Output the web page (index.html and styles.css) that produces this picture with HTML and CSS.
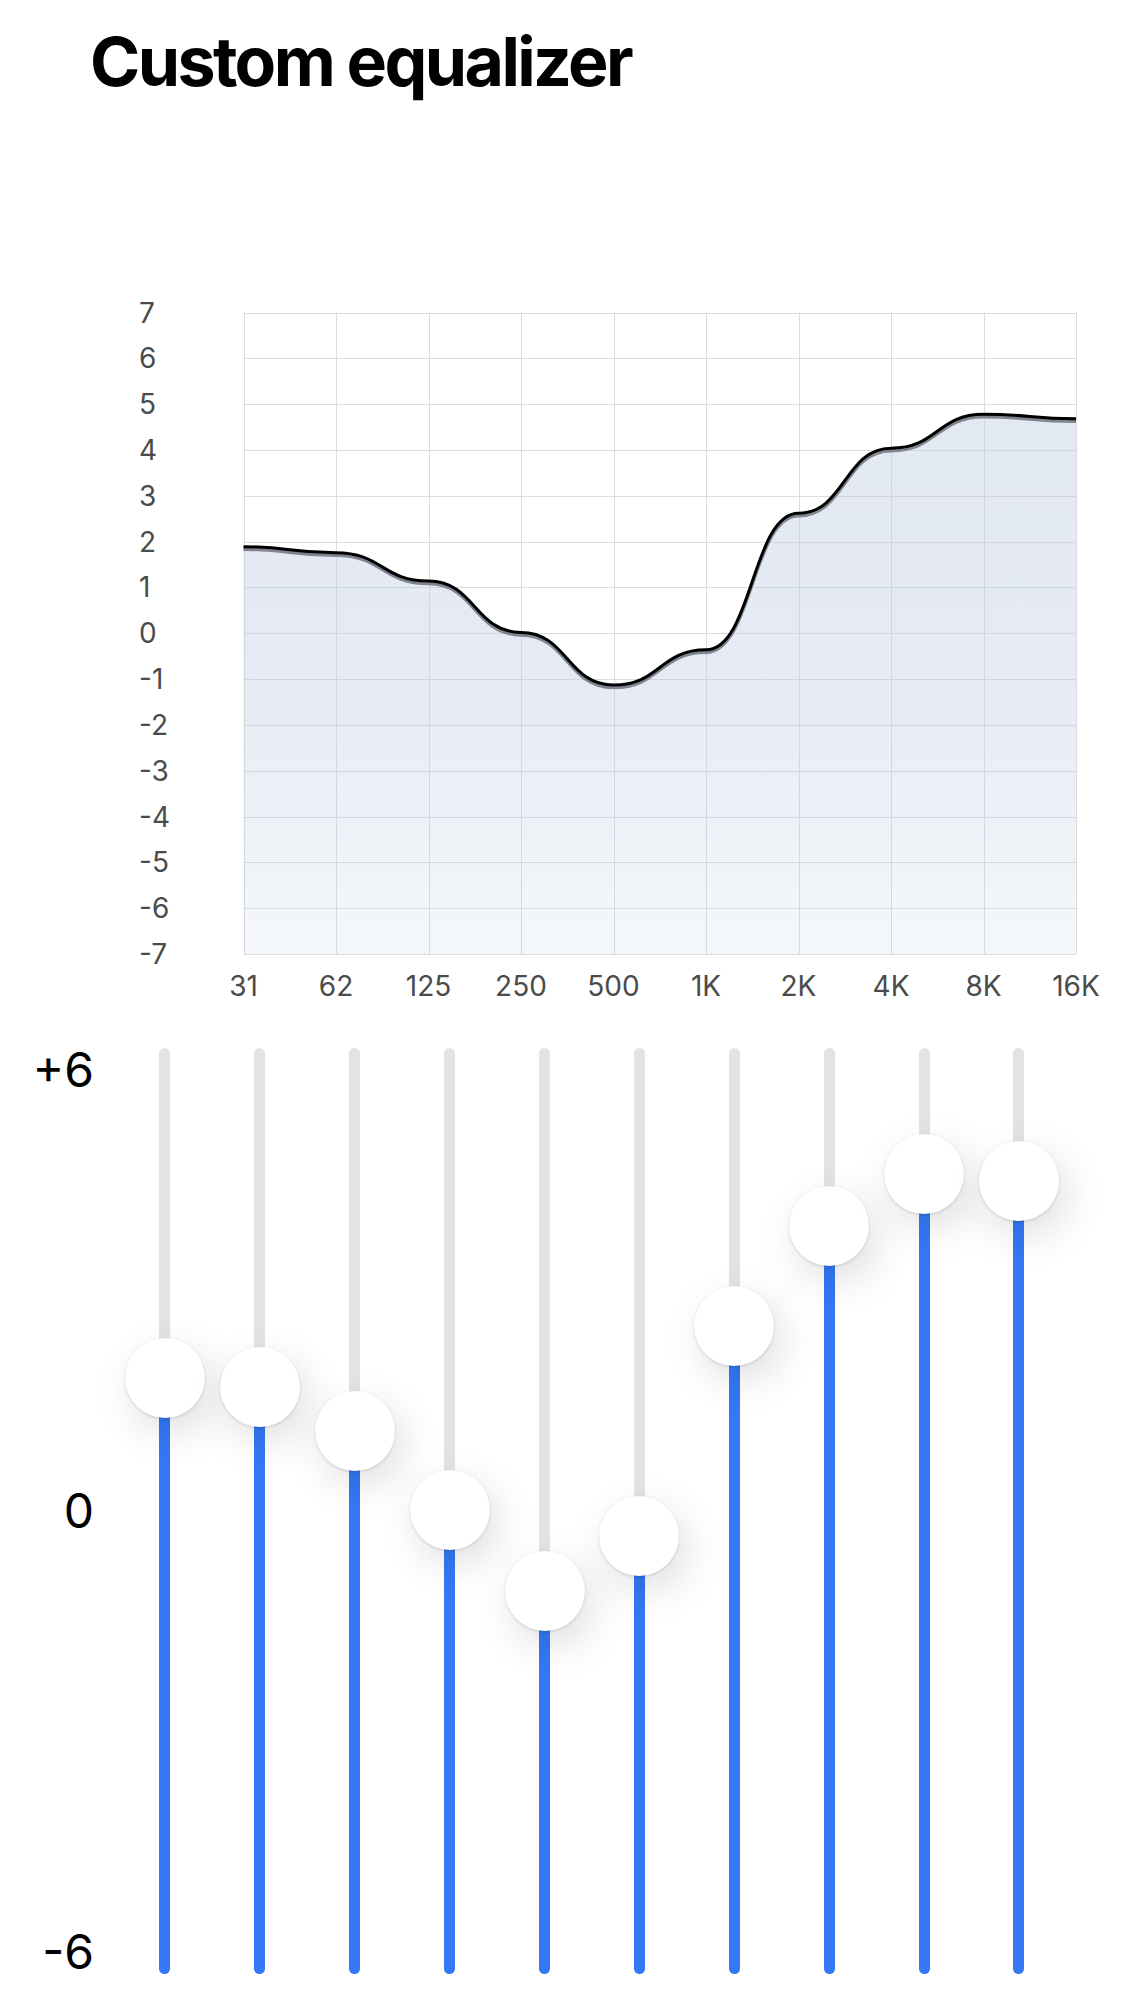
FILE: index.html
```html
<!DOCTYPE html>
<html>
<head>
    <title>Custom equalizer</title>
    <link rel="stylesheet" href="styles.css">
</head>
<body>
    <h1 class="title">Custom equalizer</h1>

    <div class="chart">
        <svg id="chart" width="1125" height="740" viewBox="0 0 1125 740"></svg>
    </div>

    <div class="eq">
        <div class="eq-scale">
            <span>+6</span>
            <span>0</span>
            <span>-6</span>
        </div>
        <div class="eq-bands" id="bands"></div>
    </div>

    <script>
        var bands = ["31", "62", "125", "250", "500", "1K", "2K", "4K", "8K", "16K"];
        var gains = [1.89, 1.76, 1.14, 0.02, -1.13, -0.36, 2.62, 4.04, 4.78, 4.68];

        function drawChart() {
            var svg = document.getElementById("chart");
            var plotLeft = 243.5, colW = 92.5;
            var plotTop = 32.5, rowH = 45.83;
            var plotRight = plotLeft + colW * 9;
            var plotBottom = plotTop + rowH * 14;
            var zeroY = plotTop + rowH * 7;

            function yFor(v) {
                return zeroY - v * rowH;
            }

            var html = `
                <defs>
                    <linearGradient id="fill" x1="0" y1="${plotTop}" x2="0" y2="${plotBottom}" gradientUnits="userSpaceOnUse">
                        <stop offset="0" stop-color="rgb(190,204,226)" stop-opacity="0.45"/>
                        <stop offset="0.55" stop-color="rgb(190,204,226)" stop-opacity="0.40"/>
                        <stop offset="1" stop-color="rgb(190,204,226)" stop-opacity="0.16"/>
                    </linearGradient>
                </defs>`;

            // grid
            var grid = "";
            for (var i = 0; i <= 14; i++) {
                var y = Math.round(plotTop + i * rowH) + 0.5;
                grid += `<line x1="${plotLeft}" y1="${y}" x2="${plotRight}" y2="${y}"/>`;
            }
            for (var j = 0; j <= 9; j++) {
                var x = Math.round(plotLeft + j * colW) + 0.5;
                grid += `<line x1="${x}" y1="${plotTop}" x2="${x}" y2="${plotBottom}"/>`;
            }
            html += `<g class="grid">${grid}</g>`;

            // curve, flat at every band
            var d = "M" + plotLeft + " " + yFor(gains[0]);
            for (var k = 1; k < gains.length; k++) {
                var x0 = plotLeft + (k - 1) * colW;
                var x1 = plotLeft + k * colW;
                var y0 = yFor(gains[k - 1]);
                var y1 = yFor(gains[k]);
                d += ` C${x0 + colW / 2} ${y0} ${x1 - colW / 2} ${y1} ${x1} ${y1}`;
            }
            var area = d + ` L${plotRight} ${plotBottom} L${plotLeft} ${plotBottom} Z`;
            html += `<path class="area" d="${area}"/>`;
            html += `<path class="curve-shadow" d="${d}" transform="translate(0 2.5)"/>`;
            html += `<path class="curve" d="${d}"/>`;

            // labels
            for (var v = 7; v >= -7; v--) {
                html += `<text x="139" y="${yFor(v)}" class="y-label">${v}</text>`;
            }
            for (var b = 0; b < bands.length; b++) {
                html += `<text x="${plotLeft + b * colW}" y="${plotBottom + 32}" class="x-label">${bands[b]}</text>`;
            }

            svg.innerHTML = html;
        }

        function drawSliders() {
            var container = document.getElementById("bands");
            var trackH = 926, thumb = 80, unit = (trackH - thumb) / 12;

            for (var i = 0; i < gains.length; i++) {
                var center = thumb / 2 + (6 - gains[i]) * unit;
                var band = document.createElement("div");
                band.className = "band";
                band.innerHTML = `
                    <div class="track">
                        <div class="track-fill" style="height: ${trackH - center}px"></div>
                        <div class="thumb" style="top: ${center - thumb / 2}px"></div>
                    </div>
                `;
                container.appendChild(band);
            }
        }

        drawChart();
        drawSliders();
    </script>
</body>
</html>
```

FILE: styles.css
```css
body {
    margin: 0;
    background-color: #fff;
    font-family: Inter, "Noto Sans", "Liberation Sans", sans-serif;
    color: #000;
}

.title {
    margin: 0;
    padding: 27px 0 0 90px;
    height: 70px;
    font-size: 68px;
    line-height: 68px;
    font-weight: 700;
    letter-spacing: -2.6px;
}

.chart {
    margin-top: 183px;
}

.chart svg {
    display: block;
}

.grid line {
    stroke: #dcdcdf;
    stroke-width: 1;
}

.area {
    fill: url(#fill);
}

.curve {
    fill: none;
    stroke: #000;
    stroke-width: 3;
}

.curve-shadow {
    fill: none;
    stroke: #7f848e;
    stroke-width: 3.5;
}

.y-label,
.x-label {
    font-family: Inter, "Noto Sans", "Liberation Sans", sans-serif;
    font-size: 28px;
    fill: #4b4b4b;
    dominant-baseline: central;
}

.x-label {
    text-anchor: middle;
}

.eq {
    display: flex;
    margin-top: 28px;
}

.eq-scale {
    display: flex;
    flex-direction: column;
    justify-content: space-between;
    width: 94px;
    height: 926px;
    text-align: right;
    font-size: 48px;
    line-height: 44px;
}

.eq-bands {
    display: flex;
    margin-left: 23.5px;
}

.band {
    display: flex;
    justify-content: center;
    width: 94.9px;
}

.track {
    position: relative;
    width: 11px;
    height: 926px;
    border-radius: 6px;
    background-color: #e3e3e6;
}

.track-fill {
    position: absolute;
    left: 0;
    bottom: 0;
    width: 100%;
    border-radius: 6px;
    background-color: #3478f6;
}

.thumb {
    position: absolute;
    left: 50%;
    z-index: 1;
    width: 80px;
    height: 80px;
    margin-left: -40px;
    border-radius: 50%;
    background-color: #fff;
    box-shadow: 0 1px 3px rgba(0, 0, 0, 0.14), 8px 14px 40px rgba(0, 0, 0, 0.13);
}
```
